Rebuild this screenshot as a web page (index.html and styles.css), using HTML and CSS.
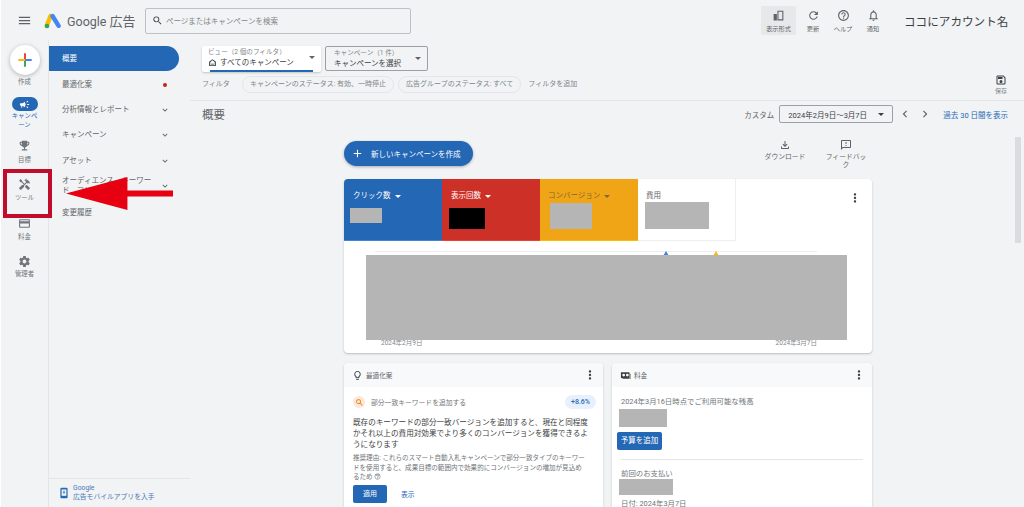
FILE: index.html
```html
<!DOCTYPE html>
<html lang="ja">

<head>
    <meta charset="UTF-8">
    <meta name="viewport" content="width=device-width, initial-scale=1.0">
    <title>Google 広告</title>
    <link rel="stylesheet" href="styles.css">
</head>

<body>
    <div class="page">
        <header class="topbar">
            <svg class="menu-icon" viewBox="0 0 24 24"><path d="M3 18h18v-2H3v2zm0-5h18v-2H3v2zm0-7v2h18V6H3z"/></svg>
            <svg class="logo" viewBox="0 0 18 16">
                <line x1="6.5" y1="3" x2="2.8" y2="12.5" stroke="#fbbc04" stroke-width="4.4" stroke-linecap="round"/>
                <line x1="8.5" y1="3" x2="14.6" y2="12.8" stroke="#4285f4" stroke-width="4.4" stroke-linecap="round"/>
                <circle cx="3" cy="13" r="2.3" fill="#34a853"/>
            </svg>
            <span class="brand">Google <span class="brand-ads">広告</span></span>
            <div class="search">
                <svg viewBox="0 0 24 24"><path d="M15.5 14h-.79l-.28-.27A6.471 6.471 0 0 0 16 9.5 6.5 6.5 0 1 0 9.5 16c1.61 0 3.09-.59 4.23-1.57l.27.28v.79l5 4.99L20.49 19l-4.99-5zm-6 0C7.01 14 5 11.99 5 9.5S7.01 5 9.5 5 14 7.01 14 9.5 11.99 14 9.5 14z"/></svg>
                <span>ページまたはキャンペーンを検索</span>
            </div>
            <div class="top-actions">
                <div class="top-action selected">
                    <svg viewBox="0 0 24 24"><path d="M3 9h6v12H3zM10 3h11v18H10zm2 2v14h7V5z"/></svg>
                    <span>表示形式</span>
                </div>
                <div class="top-action">
                    <svg viewBox="0 0 24 24"><path d="M17.65 6.35A7.958 7.958 0 0 0 12 4c-4.42 0-7.99 3.58-7.99 8s3.57 8 7.99 8c3.73 0 6.84-2.55 7.73-6h-2.08A5.99 5.99 0 0 1 12 18c-3.31 0-6-2.69-6-6s2.69-6 6-6c1.66 0 3.14.69 4.22 1.78L13 11h7V4l-2.35 2.35z"/></svg>
                    <span>更新</span>
                </div>
                <div class="top-action">
                    <svg viewBox="0 0 24 24"><path d="M11 18h2v-2h-2v2zm1-16C6.48 2 2 6.48 2 12s4.48 10 10 10 10-4.48 10-10S17.52 2 12 2zm0 18c-4.41 0-8-3.59-8-8s3.59-8 8-8 8 3.59 8 8-3.59 8-8 8zm0-14c-2.21 0-4 1.79-4 4h2c0-1.1.9-2 2-2s2 .9 2 2c0 2-3 1.75-3 5h2c0-2.25 3-2.5 3-5 0-2.21-1.79-4-4-4z"/></svg>
                    <span>ヘルプ</span>
                </div>
                <div class="top-action">
                    <svg viewBox="0 0 24 24"><path d="M12 22c1.1 0 2-.9 2-2h-4c0 1.1.9 2 2 2zm6-6v-5c0-3.07-1.64-5.64-4.5-6.32V4c0-.83-.67-1.5-1.5-1.5s-1.5.67-1.5 1.5v.68C7.63 5.36 6 7.92 6 11v5l-2 2v1h16v-1l-2-2zm-2 1H8v-6c0-2.48 1.51-4.5 4-4.5s4 2.02 4 4.5v6z"/></svg>
                    <span>通知</span>
                </div>
            </div>
            <div class="account">ココにアカウント名</div>
        </header>

        <div class="workspace">
            <aside class="rail">
                <div class="rail-item create">
                    <div class="create-btn">
                        <svg viewBox="0 0 24 24">
                            <path d="M12 3v9" stroke="#ea4335" stroke-width="2.6"/>
                            <path d="M12 12v9" stroke="#34a853" stroke-width="2.6"/>
                            <path d="M3 12h9" stroke="#fbbc04" stroke-width="2.6"/>
                            <path d="M12 12h9" stroke="#4285f4" stroke-width="2.6"/>
                        </svg>
                    </div>
                    <span>作成</span>
                </div>
                <div class="rail-item campaign">
                    <div class="campaign-pill">
                        <svg viewBox="0 0 24 24"><path d="M18 11v2h4v-2h-4zm-2 6.61c.96.71 2.21 1.65 3.2 2.39.4-.53.8-1.07 1.2-1.6-.99-.74-2.24-1.68-3.2-2.4-.4.54-.8 1.08-1.2 1.61zM20.4 5.6c-.4-.53-.8-1.07-1.2-1.6-.99.74-2.24 1.68-3.2 2.4.4.53.8 1.07 1.2 1.6.96-.72 2.21-1.65 3.2-2.4zM4 9c-1.1 0-2 .9-2 2v2c0 1.1.9 2 2 2h1v4h2v-4h1l5 3V6L8 9H4zm11.5 3c0-1.33-.58-2.53-1.5-3.35v6.69c.92-.81 1.5-2.01 1.5-3.34z"/></svg>
                    </div>
                    <span>キャンペーン</span>
                </div>
                <div class="rail-item goal">
                    <svg viewBox="0 0 24 24"><path d="M19 5h-2V3H7v2H5c-1.1 0-2 .9-2 2v1c0 2.55 1.92 4.63 4.39 4.94A5.01 5.01 0 0 0 11 15.9V19H7v2h10v-2h-4v-3.1a5.01 5.01 0 0 0 3.61-2.96C19.08 12.63 21 10.55 21 8V7c0-1.1-.9-2-2-2zM5 8V7h2v3.82C5.84 10.4 5 9.3 5 8zm14 0c0 1.3-.84 2.4-2 2.82V7h2v1z"/></svg>
                    <span>目標</span>
                </div>
                <div class="rail-item tools">
                    <svg viewBox="0 0 24 24"><path d="M21.67 18.17l-5.3-5.3h-.99l-2.54 2.54v.99l5.3 5.3c.39.39 1.02.39 1.41 0l2.12-2.12c.39-.38.39-1.02 0-1.41zM17.34 10.19l1.41-1.41 2.12 2.12c1.17-1.17 1.17-3.07 0-4.24l-3.54-3.54-1.41 1.41V1.71l-.7-.71-3.54 3.54.71.71h2.83l-1.41 1.41 1.06 1.06-2.89 2.89-4.13-4.13V5.06L4.83 2.04 2 4.87 5.03 7.9h1.41l4.13 4.13-.85.85H7.6l-5.3 5.3c-.39.39-.39 1.02 0 1.41l2.12 2.12c.39.39 1.02.39 1.41 0l5.3-5.3v-2.12l5.15-5.15 1.06 1.05z"/></svg>
                    <span>ツール</span>
                </div>
                <div class="rail-item billing">
                    <svg viewBox="0 0 24 24"><path d="M20 4H4c-1.11 0-1.99.89-1.99 2L2 18c0 1.11.89 2 2 2h16c1.11 0 2-.89 2-2V6c0-1.11-.89-2-2-2zm0 14H4v-6h16v6zm0-10H4V6h16v2z"/></svg>
                    <span>料金</span>
                </div>
                <div class="rail-item admin">
                    <svg viewBox="0 0 24 24"><path fill-rule="evenodd" d="M19.43 12.98c.04-.32.07-.64.07-.98s-.03-.66-.07-.98l2.11-1.65c.19-.15.24-.42.12-.64l-2-3.46c-.12-.22-.39-.3-.61-.22l-2.49 1c-.52-.4-1.08-.73-1.69-.98l-.38-2.65A.488.488 0 0 0 14 2h-4c-.25 0-.46.18-.49.42l-.38 2.65c-.61.25-1.17.59-1.69.98l-2.49-1c-.23-.09-.49 0-.61.22l-2 3.46c-.13.22-.07.49.12.64l2.11 1.65c-.04.32-.07.65-.07.98s.03.66.07.98l-2.11 1.65c-.19.15-.24.42-.12.64l2 3.46c.12.22.39.3.61.22l2.49-1c.52.4 1.08.73 1.69.98l.38 2.65c.03.24.24.42.49.42h4c.25 0 .46-.18.49-.42l.38-2.65c.61-.25 1.17-.59 1.69-.98l2.49 1c.23.09.49 0 .61-.22l2-3.46c.12-.22.07-.49-.12-.64l-2.11-1.65zM12 15.5c-1.93 0-3.5-1.57-3.5-3.5s1.57-3.5 3.5-3.5 3.5 1.57 3.5 3.5-1.57 3.5-3.5 3.5z"/></svg>
                    <span>管理者</span>
                </div>
            </aside>

            <nav class="sidenav">
                <div class="nav-item active">概要</div>
                <div class="nav-item"><span>最適化案</span><i class="red-dot"></i></div>
                <div class="nav-item"><span>分析情報とレポート</span><svg class="chev" viewBox="0 0 24 24"><path d="M16.59 8.59 12 13.17 7.41 8.59 6 10l6 6 6-6z"/></svg></div>
                <div class="nav-item"><span>キャンペーン</span><svg class="chev" viewBox="0 0 24 24"><path d="M16.59 8.59 12 13.17 7.41 8.59 6 10l6 6 6-6z"/></svg></div>
                <div class="nav-item"><span>アセット</span><svg class="chev" viewBox="0 0 24 24"><path d="M16.59 8.59 12 13.17 7.41 8.59 6 10l6 6 6-6z"/></svg></div>
                <div class="nav-item tall"><span>オーディエンス、キーワード、コンテンツ</span><svg class="chev" viewBox="0 0 24 24"><path d="M16.59 8.59 12 13.17 7.41 8.59 6 10l6 6 6-6z"/></svg></div>
                <div class="nav-item"><span>変更履歴</span></div>
                <div class="app-link">
                    <svg viewBox="0 0 10 14"><rect x="0.5" y="0.5" width="9" height="13" rx="1.5" fill="#2367b5"/><rect x="2" y="2.5" width="6" height="8" fill="#f1f3f4"/><path d="M5 3.5v3.5M3.6 6l1.4 1.6L6.4 6" stroke="#2367b5" fill="none"/></svg>
                    <div>
                        <div>Google</div>
                        <div>広告モバイルアプリを入手</div>
                    </div>
                </div>
            </nav>

            <main class="main">
                <div class="selectors">
                    <div class="selector view">
                        <div class="selector-label">ビュー（2 個のフィルタ）</div>
                        <div class="selector-value">
                            <svg viewBox="0 0 24 24"><path d="M12 3 3 10v11h18V10zm6 16H6v-8l6-5 6 5zM8 15h8v2H8z"/></svg>
                            すべてのキャンペーン
                        </div>
                        <i class="caret"></i>
                    </div>
                    <div class="selector camp">
                        <div class="selector-label">キャンペーン（1 件）</div>
                        <div class="selector-value">キャンペーンを選択</div>
                        <i class="caret"></i>
                    </div>
                </div>

                <div class="filters">
                    <span class="filter-title">フィルタ</span>
                    <span class="chip">キャンペーンのステータス: 有効、一時停止</span>
                    <span class="chip">広告グループのステータス: すべて</span>
                    <span class="add-filter">フィルタを追加</span>
                    <div class="save">
                        <svg viewBox="0 0 24 24"><path d="M17 3H5a2 2 0 0 0-2 2v14a2 2 0 0 0 2 2h14a2 2 0 0 0 2-2V7l-4-4zm2 16H5V5h11.17L19 7.83V19zm-7-7a3 3 0 1 0 0 6 3 3 0 0 0 0-6zM6 6h9v4H6z"/></svg>
                        <span>保存</span>
                    </div>
                </div>

                <div class="title-row">
                    <h1>概要</h1>
                    <span class="range-label">カスタム</span>
                    <div class="range-select">2024年2月9日～3月7日<i class="caret"></i></div>
                    <svg class="range-arrow" viewBox="0 0 24 24"><path d="M15.41 7.41 14 6l-6 6 6 6 1.41-1.41L10.83 12z"/></svg>
                    <svg class="range-arrow" viewBox="0 0 24 24"><path d="M10 6 8.59 7.41 13.17 12l-4.58 4.59L10 18l6-6z"/></svg>
                    <a class="range-link">過去 30 日間を表示</a>
                </div>

                <div class="scroller">
                    <div class="toolbar">
                        <div class="new-campaign">
                            <svg viewBox="0 0 24 24"><path d="M19 13h-6v6h-2v-6H5v-2h6V5h2v6h6v2z"/></svg>
                            <span>新しいキャンペーンを作成</span>
                        </div>
                        <div class="tool-actions">
                            <div class="tool-action">
                                <svg viewBox="0 0 24 24"><path d="M18 15v3H6v-3H4v3c0 1.1.9 2 2 2h12c1.1 0 2-.9 2-2v-3h-2zm-1-4-1.41-1.41L13 12.17V4h-2v8.17L8.41 9.59 7 11l5 5 5-5z"/></svg>
                                <span>ダウンロード</span>
                            </div>
                            <div class="tool-action">
                                <svg viewBox="0 0 24 24"><path d="M20 2H4c-1.1 0-2 .9-2 2v18l4-4h14c1.1 0 2-.9 2-2V4c0-1.1-.9-2-2-2zm0 14H5.17L4 17.17V4h16v12zm-9-4h2v2h-2zm0-6h2v4h-2z"/></svg>
                                <span>フィードバック</span>
                            </div>
                        </div>
                    </div>

                    <section class="card overview">
                        <div class="metrics">
                            <div class="metric blue">
                                <div class="metric-label">クリック数<i class="caret"></i></div>
                                <div class="mask m-clicks"></div>
                            </div>
                            <div class="metric red">
                                <div class="metric-label">表示回数<i class="caret"></i></div>
                                <div class="mask m-views"></div>
                            </div>
                            <div class="metric orange">
                                <div class="metric-label">コンバージョン<i class="caret"></i></div>
                                <div class="mask m-conv"></div>
                            </div>
                            <div class="metric plain">
                                <div class="metric-label">費用</div>
                                <div class="mask m-cost"></div>
                            </div>
                            <svg class="kebab" viewBox="0 0 24 24"><path d="M12 8c1.1 0 2-.9 2-2s-.9-2-2-2-2 .9-2 2 .9 2 2 2zm0 2c-1.1 0-2 .9-2 2s.9 2 2 2 2-.9 2-2-.9-2-2-2zm0 6c-1.1 0-2 .9-2 2s.9 2 2 2 2-.9 2-2-.9-2-2-2z"/></svg>
                        </div>
                        <div class="chart">
                            <div class="chart-line"></div>
                            <i class="peak peak-blue"></i>
                            <i class="peak peak-yellow"></i>
                            <div class="chart-dates"><span>2024年2月9日</span><span>2024年3月7日</span></div>
                            <div class="chart-mask"></div>
                        </div>
                    </section>

                    <div class="card-row">
                        <section class="card small">
                            <div class="card-head">
                                <svg viewBox="0 0 24 24"><path d="M9 21c0 .55.45 1 1 1h4c.55 0 1-.45 1-1v-1H9v1zm3-19C8.14 2 5 5.14 5 9c0 2.38 1.19 4.47 3 5.74V17c0 .55.45 1 1 1h6c.55 0 1-.45 1-1v-2.26c1.81-1.27 3-3.36 3-5.74 0-3.86-3.14-7-7-7zm2.85 11.1-.85.6V16h-4v-2.3l-.85-.6A4.997 4.997 0 0 1 7 9c0-2.76 2.24-5 5-5s5 2.24 5 5c0 1.63-.8 3.16-2.15 4.1z"/></svg>
                                <span>最適化案</span>
                                <svg class="kebab" viewBox="0 0 24 24"><path d="M12 8c1.1 0 2-.9 2-2s-.9-2-2-2-2 .9-2 2 .9 2 2 2zm0 2c-1.1 0-2 .9-2 2s.9 2 2 2 2-.9 2-2-.9-2-2-2zm0 6c-1.1 0-2 .9-2 2s.9 2 2 2 2-.9 2-2-.9-2-2-2z"/></svg>
                            </div>
                            <div class="tip-body">
                                <div class="tip-title">
                                    <div class="tip-icon"><svg viewBox="0 0 24 24"><path d="M15.5 14h-.79l-.28-.27A6.471 6.471 0 0 0 16 9.5 6.5 6.5 0 1 0 9.5 16c1.61 0 3.09-.59 4.23-1.57l.27.28v.79l5 4.99L20.49 19l-4.99-5zm-6 0C7.01 14 5 11.99 5 9.5S7.01 5 9.5 5 14 7.01 14 9.5 11.99 14 9.5 14z"/></svg></div>
                                    <span>部分一致キーワードを追加する</span>
                                    <b class="uplift">+8.6%</b>
                                </div>
                                <p class="tip-text">既存のキーワードの部分一致バージョンを追加すると、現在と同程度かそれ以上の費用対効果でより多くのコンバージョンを獲得できるようになります</p>
                                <p class="tip-note">推奨理由: これらのスマート自動入札キャンペーンで部分一致タイプのキーワードを使用すると、成果目標の範囲内で効果的にコンバージョンの増加が見込めるため <svg class="note-help" viewBox="0 0 24 24"><path d="M11 18h2v-2h-2v2zm1-16C6.48 2 2 6.48 2 12s4.48 10 10 10 10-4.48 10-10S17.52 2 12 2zm0 18c-4.41 0-8-3.59-8-8s3.59-8 8-8 8 3.59 8 8-3.59 8-8 8zm0-14c-2.21 0-4 1.79-4 4h2c0-1.1.9-2 2-2s2 .9 2 2c0 2-3 1.75-3 5h2c0-2.25 3-2.5 3-5 0-2.21-1.79-4-4-4z"/></svg></p>
                                <div class="tip-actions">
                                    <span class="btn">適用</span>
                                    <a>表示</a>
                                </div>
                            </div>
                        </section>
                        <section class="card small">
                            <div class="card-head">
                                <svg viewBox="0 0 24 24"><path fill-rule="evenodd" d="M2 5h17a2 2 0 0 1 2 2v9a2 2 0 0 1-2 2H4a2 2 0 0 1-2-2zm6 3a3 3 0 1 0 0 6 3 3 0 0 0 0-6zm8 0a3 3 0 1 0 0 6 3 3 0 0 0 0-6zM6 19h17V8h-1v10H6z"/></svg>
                                <span>料金</span>
                                <svg class="kebab" viewBox="0 0 24 24"><path d="M12 8c1.1 0 2-.9 2-2s-.9-2-2-2-2 .9-2 2 .9 2 2 2zm0 2c-1.1 0-2 .9-2 2s.9 2 2 2 2-.9 2-2-.9-2-2-2zm0 6c-1.1 0-2 .9-2 2s.9 2 2 2 2-.9 2-2-.9-2-2-2z"/></svg>
                            </div>
                            <div class="bill-body">
                                <div class="bill-text">2024年3月16日時点でご利用可能な残高</div>
                                <div class="mask m-balance"></div>
                                <span class="btn add-budget">予算を追加</span>
                                <hr>
                                <div class="bill-text">前回のお支払い</div>
                                <div class="mask m-last"></div>
                                <div class="bill-text bill-date">日付: 2024年3月7日</div>
                            </div>
                        </section>
                    </div>
                </div>
                <div class="scrollbar"></div>
            </main>
        </div>

        <!-- annotation drawn on top of the screenshot -->
        <div class="tools-frame"></div>
        <svg class="red-arrow" viewBox="0 0 108 32" preserveAspectRatio="none"><path d="M0 16 62 0v13h46v6H62v13z" fill="#e60012"/></svg>
    </div>
</body>

</html>
```

FILE: styles.css
```css
* {
    box-sizing: border-box;
}

html,
body {
    overflow: hidden;
}

body {
    margin: 0;
    font-family: Roboto, "Noto Sans CJK JP", sans-serif;
    color: #5f6368;
    background-color: #fff;
}

svg {
    fill: currentColor;
    display: block;
    flex-shrink: 0;
}

.page {
    position: relative;
    width: 1024px;
    height: 507px;
    margin-left: 1px;
    padding-top: 1px;
    overflow: hidden;
    background-color: #f1f3f4;
    display: flex;
    flex-direction: column;
}

/* top bar */
.topbar {
    height: 39px;
    display: flex;
    align-items: center;
    flex-shrink: 0;
}
.menu-icon {
    width: 15px;
    height: 15px;
    margin-left: 16px;
}
.logo {
    width: 18px;
    height: 16px;
    margin-left: 12px;
}
.brand {
    width: 67px;
    margin-left: 5px;
    font-size: 12.5px;
    color: #5f6368;
    white-space: nowrap;
}
.brand-ads {
    font-size: 13px;
}
.search {
    width: 266px;
    height: 26px;
    margin-left: 11px;
    display: flex;
    align-items: center;
    gap: 3px;
    padding-left: 6px;
    border: 1px solid #bdc1c6;
    border-radius: 2px;
    font-size: 7.5px;
    color: #80868b;
}
.search svg {
    width: 11px;
    height: 11px;
    color: #3c4043;
}
.top-actions {
    margin-left: 350px;
    display: flex;
    align-items: center;
}
.top-action {
    width: 30px;
    height: 29px;
    display: flex;
    flex-direction: column;
    align-items: center;
    justify-content: center;
    gap: 2px;
    font-size: 6.2px;
    white-space: nowrap;
    color: #5f6368;
}
.top-action svg {
    width: 13px;
    height: 13px;
}
.top-action.selected {
    width: 35px;
    margin-right: 2px;
    background-color: #e6e8ea;
    border-radius: 2px;
}
.account {
    margin-left: 16px;
    font-size: 11.6px;
    color: #3c4043;
    white-space: nowrap;
}

.workspace {
    flex: 1;
    display: flex;
    min-height: 0;
}

/* icon rail */
.rail {
    width: 48px;
    flex-shrink: 0;
    border-right: 1px solid #e3e5e8;
    display: flex;
    flex-direction: column;
    align-items: center;
    font-size: 6.4px;
    color: #70757a;
}
.rail-item {
    display: flex;
    flex-direction: column;
    align-items: center;
    text-align: center;
    line-height: 9px;
}
.rail-item svg {
    width: 13px;
    height: 13px;
}
.create {
    margin-top: 5px;
}
.create-btn {
    width: 30px;
    height: 30px;
    border-radius: 50%;
    background-color: #fff;
    box-shadow: 0 1px 4px rgba(60, 64, 67, 0.35);
    display: flex;
    align-items: center;
    justify-content: center;
    margin-bottom: 3px;
}
.create-btn svg {
    width: 18px;
    height: 18px;
    fill: none;
}
.campaign {
    margin-top: 10px;
    width: 30px;
    color: #2367b5;
}
.campaign-pill {
    width: 26px;
    height: 14px;
    border-radius: 7px;
    background-color: #2367b5;
    color: #fff;
    display: flex;
    align-items: center;
    justify-content: center;
    margin-bottom: 1px;
}
.campaign-pill svg {
    width: 11px;
    height: 11px;
}
.goal {
    margin-top: 9px;
    gap: 4px;
}
.tools {
    margin-top: 13px;
    gap: 3px;
}
.billing {
    margin-top: 14px;
    gap: 3px;
}
.admin {
    margin-top: 13px;
    gap: 2px;
}

/* side nav */
.sidenav {
    width: 141px;
    flex-shrink: 0;
    padding: 6px 11px 0 0;
    display: flex;
    flex-direction: column;
    font-size: 7.5px;
    color: #5f6368;
}
.nav-item {
    height: 25.4px;
    padding: 1px 10px 0 13px;
    display: flex;
    align-items: center;
    justify-content: space-between;
    line-height: 10px;
}
.nav-item.tall {
    height: 27px;
    padding-top: 0;
}
.nav-item.tall span {
    width: 92px;
    height: 20px;
    overflow: hidden;
}
.nav-item.active {
    padding-top: 0;
    background-color: #2367b5;
    color: #fff;
    border-radius: 0 13px 13px 0;
}
.red-dot {
    width: 4px;
    height: 4px;
    margin-right: 2px;
    border-radius: 50%;
    background-color: #c5221f;
}
.chev {
    width: 10px;
    height: 10px;
    margin-right: -1px;
}
.app-link {
    margin: auto -11px 0 0;
    height: 29px;
    border-top: 1px solid #e3e5e8;
    padding-left: 11px;
    display: flex;
    align-items: center;
    gap: 5px;
    font-size: 6.8px;
    line-height: 9px;
    color: #4a78b8;
}
.app-link svg {
    width: 8px;
    height: 12px;
}

/* main column */
.main {
    position: relative;
    flex: 1;
    min-width: 0;
    display: flex;
    flex-direction: column;
}
.selectors {
    flex: none;
    margin-top: 6px;
    padding-left: 12px;
    display: flex;
    align-items: flex-start;
    gap: 4px;
}
.selector {
    position: relative;
    height: 26px;
    padding: 2px 0 0 6px;
    border-radius: 2px;
    font-size: 7.5px;
    color: #3c4043;
}
.selector .caret {
    position: absolute;
    right: 6px;
    top: 10px;
    border-top-color: #5f6368;
}
.selector.view {
    width: 119px;
    background-color: #fff;
    box-shadow: 0 1px 2px rgba(60, 64, 67, 0.25);
}
.selector.view::after {
    content: "";
    position: absolute;
    left: 8px;
    right: 8px;
    bottom: 0;
    height: 2px;
    background-color: #2367b5;
}
.selector.camp {
    width: 103px;
    height: 25px;
    padding-left: 8px;
    border: 1px solid #9aa0a6;
}
.selector-label {
    font-size: 6.6px;
    line-height: 9px;
    color: #80868b;
}
.selector-value {
    display: flex;
    align-items: center;
    gap: 3px;
    line-height: 11px;
}
.selector-value svg {
    width: 9px;
    height: 9px;
}
.caret {
    display: inline-block;
    width: 0;
    height: 0;
    border-left: 3px solid transparent;
    border-right: 3px solid transparent;
    border-top: 3px solid currentColor;
}

.filters {
    flex: none;
    position: relative;
    height: 29px;
    padding: 4px 0 0 12px;
    display: flex;
    align-items: flex-start;
    gap: 4px;
    border-bottom: 1px solid #e3e5e8;
    font-size: 7px;
    color: #80868b;
    white-space: nowrap;
}
.filter-title {
    width: 36px;
    line-height: 16px;
}
.chip {
    height: 17px;
    padding: 0 7px;
    line-height: 15px;
    border: 1px solid #e3e5e8;
    border-radius: 9px;
}
.add-filter {
    margin-left: 3px;
    line-height: 16px;
}
.save {
    margin-left: auto;
    margin-right: 18px;
    margin-top: -2px;
    display: flex;
    flex-direction: column;
    align-items: center;
    gap: 1px;
    font-size: 6px;
    line-height: 8px;
}
.save svg {
    width: 12px;
    height: 12px;
    color: #3c4043;
}

.title-row {
    flex: none;
    height: 26px;
    padding-left: 12px;
    display: flex;
    align-items: center;
    font-size: 7.5px;
    color: #5f6368;
    white-space: nowrap;
}
.title-row h1 {
    margin: 0 auto 0 0;
    font-size: 11.5px;
    font-weight: 400;
}
.range-select {
    width: 114px;
    height: 18px;
    margin: 0 5px 0 5px;
    padding: 0 8px 0 8px;
    display: flex;
    align-items: center;
    justify-content: space-between;
    border: 1px solid #9aa0a6;
    border-radius: 2px;
    color: #3c4043;
}
.range-arrow {
    width: 14px;
    height: 14px;
    margin-right: 6px;
}
.range-link {
    margin: 0 17px 0 5px;
    color: #2367b5;
}

.scroller {
    flex: none;
    width: 528px;
    margin-left: 154px;
    padding-top: 14px;
}
.toolbar {
    display: flex;
    justify-content: space-between;
    height: 38px;
}
.new-campaign {
    width: 129px;
    height: 25px;
    border-radius: 13px;
    background-color: #2367b5;
    box-shadow: 0 1px 3px rgba(60, 64, 67, 0.4);
    color: #fff;
    font-size: 7.5px;
    display: flex;
    align-items: center;
    gap: 7px;
    padding-left: 7px;
}
.new-campaign svg {
    width: 13px;
    height: 13px;
}
.tool-actions {
    display: flex;
    gap: 17px;
    margin: -2px 4px 0 0;
    font-size: 6.8px;
}
.tool-action {
    width: 44px;
    display: flex;
    flex-direction: column;
    align-items: center;
    text-align: center;
    line-height: 8px;
    gap: 2px;
}
.tool-action svg {
    width: 12px;
    height: 12px;
}

.card {
    background-color: #fff;
    border-radius: 4px;
    box-shadow: 0 1px 2px rgba(60, 64, 67, 0.3);
}
.overview {
    height: 174px;
    overflow: hidden;
}
.metrics {
    position: relative;
    display: flex;
    height: 62px;
}
.metric {
    width: 98px;
    padding: 11px 0 0 9px;
    font-size: 7.5px;
    border-bottom: 1px solid transparent;
    color: #fff;
}
.metric-label {
    line-height: 12px;
    display: flex;
    align-items: center;
    gap: 4px;
}
.metric.blue {
    background-color: #2367b5;
    border-bottom-color: #4285d6;
}
.metric.red {
    background-color: #cd3026;
    border-bottom-color: #ea4335;
}
.metric.orange {
    background-color: #efa515;
    border-bottom-color: #fbbc04;
    color: #80683a;
    padding-left: 8px;
}
.metric.plain {
    color: #5f6368;
    border-right: 1px solid #eceef0;
    border-bottom-color: #eceef0;
    padding-left: 8px;
}
.mask {
    background-color: #b4b5b4;
}
.m-clicks {
    width: 32px;
    height: 15px;
    margin: 6px 0 0 -3px;
}
.m-views {
    width: 36px;
    height: 21px;
    margin: 6px 0 0 -2px;
    background-color: #000;
}
.m-conv {
    width: 42px;
    height: 26px;
    margin: 1px 0 0 2px;
}
.m-cost {
    width: 64px;
    height: 27px;
    margin-left: -1px;
}
.kebab {
    width: 14px;
    height: 14px;
    color: #3c4043;
}
.metrics .kebab {
    position: absolute;
    right: 10px;
    top: 12px;
}

.chart {
    position: relative;
    height: 112px;
    padding-top: 10px;
}
.chart-line {
    height: 1px;
    margin: 0 55px 0 31px;
    background-color: #eceef0;
}
.peak {
    position: absolute;
    top: 10px;
    width: 0;
    height: 0;
    border-left: 3px solid transparent;
    border-right: 3px solid transparent;
}
.peak-blue {
    left: 319px;
    border-bottom: 5px solid #4285d6;
}
.peak-yellow {
    left: 369px;
    border-bottom: 5px solid #fbbc04;
}
.chart-mask {
    position: absolute;
    left: 22px;
    top: 14px;
    width: 481px;
    height: 85px;
    background-color: #b4b5b4;
}
.chart-dates {
    position: absolute;
    left: 37px;
    right: 55px;
    top: 96px;
    display: flex;
    justify-content: space-between;
    font-size: 6.5px;
    color: #80868b;
}

.card-row {
    display: grid;
    grid-template-columns: 259px 260px;
    gap: 9px;
    margin-top: 10px;
}
.small {
    height: 160px;
    overflow: hidden;
}
.card-head {
    height: 24px;
    padding: 0 10px 0 8px;
    display: flex;
    align-items: center;
    gap: 3px;
    background-color: #f8f9fa;
    font-size: 6.6px;
    color: #5f6368;
}
.card-head svg {
    width: 11px;
    height: 11px;
    color: #3c4043;
}
.card-head .kebab {
    width: 14px;
    height: 14px;
    margin-left: auto;
    margin-right: -4px;
}
.tip-body {
    padding: 8px 7px 0 9px;
}
.tip-title {
    display: flex;
    align-items: center;
    gap: 6px;
    height: 14px;
    font-size: 6.8px;
    color: #70757a;
}
.tip-icon {
    width: 12px;
    height: 12px;
    border-radius: 50%;
    background-color: #fde8d8;
    color: #e37400;
    display: flex;
    align-items: center;
    justify-content: center;
}
.tip-icon svg {
    width: 9px;
    height: 9px;
}
.uplift {
    margin-left: auto;
    width: 31px;
    height: 14px;
    border-radius: 7px;
    background-color: #e8f0fe;
    color: #2367b5;
    font-size: 7px;
    font-weight: 500;
    line-height: 14px;
    text-align: center;
}
.tip-text {
    width: 236px;
    margin: 8px 0 0;
    font-size: 7.6px;
    line-height: 11px;
    color: #3c4043;
}
.tip-note {
    width: 234px;
    margin: 4px 0 0;
    font-size: 6.55px;
    line-height: 9.5px;
    color: #70757a;
}
.note-help {
    display: inline-block;
    width: 7px;
    height: 7px;
    vertical-align: -1px;
}
.tip-actions {
    margin-top: 2px;
    display: flex;
    align-items: center;
    gap: 14px;
    font-size: 6.8px;
    color: #2367b5;
}
.btn {
    display: inline-block;
    width: 34px;
    height: 18px;
    border-radius: 2px;
    background-color: #2367b5;
    color: #fff;
    font-size: 7px;
    line-height: 18px;
    text-align: center;
}
.bill-body {
    padding: 9px 9px 0 9px;
}
.bill-text {
    font-size: 7.4px;
    line-height: 11px;
    color: #70757a;
}
.m-balance {
    width: 48px;
    height: 18px;
    margin: 2px 0 0 -2px;
}
.add-budget {
    display: block;
    width: 45px;
    margin: 5px 0 0 -4px;
    font-size: 7.5px;
}
.bill-body hr {
    height: 1px;
    margin: 9px 0 8px;
    border: 0;
    background-color: #e3e5e8;
}
.m-last {
    width: 54px;
    height: 16px;
    margin: 0 0 0 -2px;
}
.bill-date {
    margin-top: 3px;
}

.scrollbar {
    position: absolute;
    right: 4px;
    top: 97px;
    width: 6px;
    height: 106px;
    background-color: #dadce0;
}

/* red annotation */
.tools-frame {
    position: absolute;
    left: 2px;
    top: 169px;
    width: 49px;
    height: 49px;
    border: 4px solid #c00d2b;
}
.red-arrow {
    position: absolute;
    left: 65px;
    top: 177px;
    width: 107px;
    height: 33px;
}
```
